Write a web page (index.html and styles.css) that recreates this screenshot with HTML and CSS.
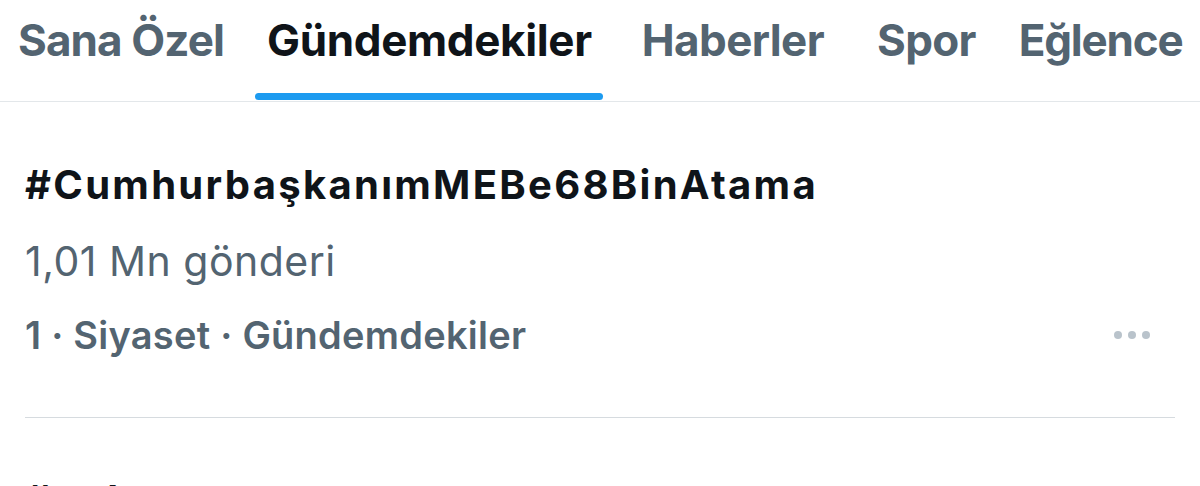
FILE: index.html
```html
<!DOCTYPE html>
<html lang="tr">
<head>
<meta charset="utf-8">
<title>Gündemdekiler</title>
<link rel="stylesheet" href="styles.css">
</head>
<body>
<nav class="tabs">
  <div class="tab"><span class="tab-label">Sana Özel</span></div>
  <div class="tab active"><span class="tab-label">Gündemdekiler</span><span class="indicator"></span></div>
  <div class="tab"><span class="tab-label">Haberler</span></div>
  <div class="tab"><span class="tab-label">Spor</span></div>
  <div class="tab"><span class="tab-label">Eğlence</span></div>
</nav>
<main class="list">
  <section class="trend">
    <div class="trend-title">#CumhurbaşkanımMEBe68BinAtama</div>
    <div class="trend-count">1,01 Mn gönderi</div>
    <div class="trend-meta">
      <span>1 · Siyaset · Gündemdekiler</span>
      <span class="more"><i></i><i></i><i></i></span>
    </div>
  </section>
  <section class="trend next">
    <div class="trend-title">#onlar</div>
  </section>
</main>
</body>
</html>
```
FILE: styles.css
```css
html, body {
  margin: 0;
  padding: 0;
  background: #ffffff;
  overflow: hidden;
}
body {
  width: 1200px;
  height: 486px;
  font-family: Inter, "Noto Sans", "Liberation Sans", sans-serif;
  -webkit-font-smoothing: antialiased;
}
.tabs {
  display: flex;
  height: 101px;
  border-bottom: 1px solid #e3e7ea;
  padding-left: 6px;
  gap: 20px;
  white-space: nowrap;
}
.tab {
  position: relative;
  padding: 18px 12px 0;
  font-size: 44px;
  line-height: 1;
  font-weight: 700;
  color: #536471;
  letter-spacing: -0.7px;
}
.tab:nth-child(1) {
  padding-right: 11px;
  letter-spacing: -0.9px;
}
.tab:nth-child(3) {
  padding-left: 19px;
  padding-right: 17px;
  letter-spacing: -0.6px;
}
.tab:nth-child(4) {
  padding-left: 16px;
  padding-right: 11px;
}
.tab.active {
  color: #0f1419;
  letter-spacing: -0.35px;
  padding-right: 11px;
}
.tab:nth-child(5) {
  letter-spacing: -1.2px;
}
.indicator {
  position: absolute;
  left: 0;
  right: 0;
  bottom: 1px;
  height: 7px;
  border-radius: 4px;
  background: #1d9bf0;
}
.trend {
  margin: 0 25px;
  border-bottom: 1px solid #d6dbdf;
  padding: 63px 0 63px;
}
.trend-title {
  font-size: 40px;
  line-height: 1;
  font-weight: 700;
  color: #0f1419;
  letter-spacing: 2.3px;
}
.trend-count {
  margin-top: 36px;
  font-size: 41px;
  line-height: 1;
  font-weight: 400;
  color: #536471;
  letter-spacing: 0.5px;
}
.trend-meta {
  margin-top: 34px;
  display: flex;
  justify-content: space-between;
  align-items: center;
  font-size: 38px;
  line-height: 1;
  font-weight: 600;
  color: #536471;
  letter-spacing: 0.25px;
}
.more {
  display: flex;
  gap: 6px;
  padding-right: 25px;
}
.more i {
  width: 8px;
  height: 8px;
  border-radius: 50%;
  background: #b9c3cb;
}
.trend.next {
  border-bottom: none;
  padding-top: 62px;
}
```
